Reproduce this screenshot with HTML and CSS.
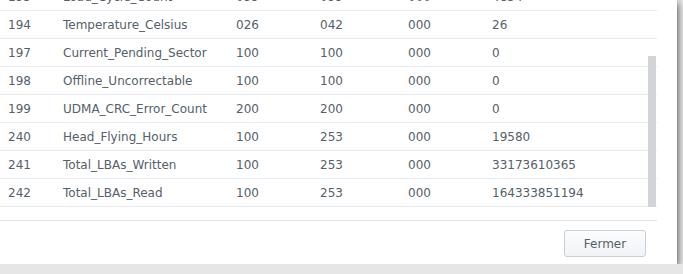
FILE: index.html
```html
<!DOCTYPE html>
<html>
<head>
    <title>S.M.A.R.T.</title>
    <link rel="stylesheet" href="styles.css">
</head>
<body>
    <div class="page-thumb"></div>
    <div class="dialog">
        <div class="grid-area">
            <div class="grid-clip">
                <table class="smart-table">
                    <tbody>
                        <tr><td>193</td><td>Load_Cycle_Count</td><td>099</td><td>099</td><td>000</td><td>4854</td></tr>
                        <tr><td>194</td><td>Temperature_Celsius</td><td>026</td><td>042</td><td>000</td><td>26</td></tr>
                        <tr><td>197</td><td>Current_Pending_Sector</td><td>100</td><td>100</td><td>000</td><td>0</td></tr>
                        <tr><td>198</td><td>Offline_Uncorrectable</td><td>100</td><td>100</td><td>000</td><td>0</td></tr>
                        <tr><td>199</td><td>UDMA_CRC_Error_Count</td><td>200</td><td>200</td><td>000</td><td>0</td></tr>
                        <tr><td>240</td><td>Head_Flying_Hours</td><td>100</td><td>253</td><td>000</td><td>19580</td></tr>
                        <tr><td>241</td><td>Total_LBAs_Written</td><td>100</td><td>253</td><td>000</td><td>33173610365</td></tr>
                        <tr><td>242</td><td>Total_LBAs_Read</td><td>100</td><td>253</td><td>000</td><td>164333851194</td></tr>
                    </tbody>
                </table>
            </div>
            <div class="scroll-thumb"></div>
        </div>
        <div class="dialog-footer">
            <button class="btn">Fermer</button>
        </div>
    </div>
</body>
</html>
```

FILE: styles.css
```css
body {
    margin: 0;
    background-color: #e6e6e6;
    font-family: "DejaVu Sans", Verdana, sans-serif;
    font-size: 12px;
    color: #55606a;
    overflow: hidden;
    position: relative;
}
.page-thumb {
    position: absolute;
    left: 648px;
    top: 262px;
    width: 9px;
    height: 12px;
    background-color: #c4c5c8;
}
.dialog {
    position: relative;
    width: 657px;
    height: 264px;
    padding-right: 20px;
    background-color: #fff;
    box-shadow: 0 3px 8px rgba(0, 0, 0, 0.8);
    display: flex;
    flex-direction: column;
}
.grid-area {
    position: relative;
    height: 220px;
}
.grid-clip {
    height: 207px;
    overflow: hidden;
}
.smart-table {
    border-collapse: collapse;
    width: 100%;
    margin-top: -17px;
    table-layout: fixed;
}
.smart-table td {
    height: 27px;
    padding: 0 0 0 8px;
    border-bottom: 1px solid #e8e9ef;
    white-space: nowrap;
}
.smart-table td:nth-child(1) { width: 47px; }
.smart-table td:nth-child(2) { width: 165px; }
.smart-table td:nth-child(3) { width: 76px; }
.smart-table td:nth-child(4) { width: 80px; }
.smart-table td:nth-child(5) { width: 76px; }
.scroll-thumb {
    position: absolute;
    left: 648px;
    top: 56px;
    width: 8px;
    height: 151px;
    background-color: #d3d4d7;
}
.dialog-footer {
    flex: 1;
    border-top: 1px solid #e1e2e4;
    display: flex;
    justify-content: flex-end;
    align-items: flex-start;
    padding: 9px 11px 0 0;
}
.btn {
    width: 82px;
    height: 27px;
    font-family: inherit;
    font-size: 12px;
    color: #55606a;
    background: linear-gradient(#fbfcfd, #f1f3f6);
    border: 1px solid #c9cfd9;
    border-radius: 3px;
}
```
